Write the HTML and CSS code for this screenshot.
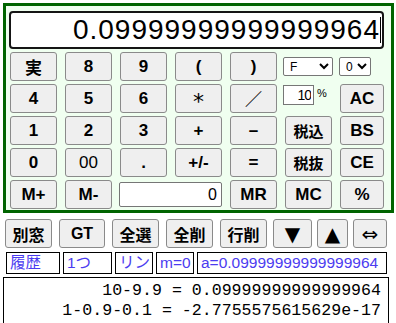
FILE: index.html
```html
<!DOCTYPE html>
<html lang="ja">
<head>
    <meta charset="UTF-8">
    <title>電卓</title>
    <link rel="stylesheet" href="styles.css">
</head>
<body>

    <div class="calc">
        <div class="display">0.09999999999999964<span class="caret"></span></div>
        <div class="keys">
            <button class="key">実</button>
            <button class="key">8</button>
            <button class="key">9</button>
            <button class="key">(</button>
            <button class="key">)</button>
            <div class="opts">
                <select class="sel-mode"><option>F</option></select>
                <select class="sel-digits"><option>0</option></select>
            </div>

            <button class="key">4</button>
            <button class="key">5</button>
            <button class="key">6</button>
            <button class="key star">*</button>
            <button class="key">／</button>
            <div class="rate"><input class="rate-input" value="10"><span class="pct">%</span></div>
            <button class="key">AC</button>

            <button class="key">1</button>
            <button class="key">2</button>
            <button class="key">3</button>
            <button class="key">+</button>
            <button class="key">–</button>
            <button class="key small">税込</button>
            <button class="key">BS</button>

            <button class="key">0</button>
            <button class="key light">00</button>
            <button class="key">.</button>
            <button class="key">+/-</button>
            <button class="key">=</button>
            <button class="key small">税抜</button>
            <button class="key">CE</button>

            <button class="key">M+</button>
            <button class="key">M-</button>
            <input class="memory" value="0">
            <button class="key">MR</button>
            <button class="key">MC</button>
            <button class="key">%</button>
        </div>
    </div>

    <div class="toolbar">
        <button class="tool w47">別窓</button>
        <button class="tool w46">GT</button>
        <button class="tool w47">全選</button>
        <button class="tool w47">全削</button>
        <button class="tool w47">行削</button>
        <div class="arrows">
            <button class="tool w39 tri">▼</button>
            <button class="tool w31 tri">▲</button>
            <button class="tool w34 thin">⇔</button>
        </div>
    </div>

    <div class="status">
        <span class="tag w54">履歴</span>
        <span class="tag w49">1つ</span>
        <span class="tag w38">リン</span>
        <span class="tag w38">m=0</span>
        <span class="tag w190">a=0.09999999999999964</span>
    </div>

    <div class="history">
        <div class="line">10-9.9 = 0.09999999999999964</div>
        <div class="line">1-0.9-0.1 = -2.7755575615629e-17</div>
    </div>

</body>
</html>
```

FILE: styles.css
```css
body {
    margin: 0;
    padding: 3px;
    background-color: #ffffff;
    font-family: "Liberation Sans", "Noto Sans CJK JP", sans-serif;
}

.calc {
    box-sizing: border-box;
    width: 391px;
    border: 3px solid #006400;
    background-color: #f0fff0;
    padding: 5px 7px 1px 3px;
}

.display {
    box-sizing: border-box;
    height: 38px;
    border: 2px solid #151515;
    border-radius: 4px;
    background-color: #ffffff;
    display: flex;
    justify-content: flex-end;
    align-items: center;
    padding-right: 1px;
    font-size: 28px;
    letter-spacing: 1px;
    color: #000000;
    margin-bottom: 3px;
}

.caret {
    display: inline-block;
    width: 1px;
    height: 26px;
    background-color: #000000;
}

.keys {
    display: grid;
    grid-template-columns: 47px 47px 47px 47px 47px 47px 44px;
    grid-auto-rows: 29px;
    column-gap: 8px;
    row-gap: 3px;
    margin-left: 1px;
}

.key,
.tool {
    box-sizing: border-box;
    margin: 0;
    padding: 0;
    background-color: #efefef;
    border: 1px solid #8a8a8a;
    border-radius: 3px;
    font-family: "Liberation Sans", "Noto Sans CJK JP", sans-serif;
    font-weight: bold;
    color: #000000;
}

.key {
    font-size: 17px;
}

.key.small {
    font-size: 15px;
}

.key.light {
    font-weight: normal;
}

.key.star {
    font-family: "DejaVu Sans", sans-serif;
    font-weight: normal;
    font-size: 22px;
    padding-top: 4px;
}

.opts {
    grid-column: span 2;
    display: flex;
    align-items: center;
    gap: 6px;
    margin-left: -2px;
}

.opts select {
    box-sizing: border-box;
    height: 19px;
    font-size: 12px;
    font-family: "Liberation Sans", sans-serif;
    border: 1px solid #767676;
    border-radius: 2px;
    background-color: #ffffff;
    padding: 0 0 0 2px;
}

.sel-mode {
    width: 50px;
}

.sel-digits {
    width: 32px;
}

.rate {
    display: flex;
    align-items: flex-start;
    padding-top: 1px;
    margin-left: -2px;
}

.rate-input {
    box-sizing: border-box;
    width: 31px;
    height: 20px;
    border: 1px solid #767676;
    padding: 0 2px 0 0;
    text-align: right;
    font-family: "Liberation Sans", sans-serif;
    font-size: 14px;
    letter-spacing: -1px;
}

.pct {
    font-size: 11px;
    margin: 2px 0 0 3px;
}

.memory {
    grid-column: span 2;
    box-sizing: border-box;
    width: 103px;
    height: 25px;
    margin: 2px 0 0 -1px;
    border: 1px solid #767676;
    border-radius: 2px;
    padding: 0 4px 0 0;
    text-align: right;
    font-family: "Liberation Sans", sans-serif;
    font-size: 16px;
}

.toolbar {
    display: flex;
    gap: 7px;
    margin: 6px 0 0 2px;
}

.arrows {
    display: flex;
    gap: 5px;
    margin-left: -1px;
}

.tool {
    height: 29px;
    font-size: 16px;
}

.tool.tri {
    font-family: "DejaVu Sans", sans-serif;
    font-weight: normal;
    font-size: 20px;
}

.tool.thin {
    font-family: "DejaVu Sans", sans-serif;
    font-weight: normal;
    font-size: 20px;
}

.w31 { width: 31px; }
.w34 { width: 34px; }
.w38 { width: 38px; }
.w39 { width: 39px; }
.w46 { width: 46px; }
.w47 { width: 47px; }
.w49 { width: 49px; }
.w54 { width: 54px; }
.w190 { width: 190px; }

.status {
    display: flex;
    gap: 3px;
    margin: 4px 0 0 3px;
}

.tag {
    box-sizing: border-box;
    height: 22px;
    border: 1px solid #000000;
    padding: 0 0 0 3px;
    line-height: 20px;
    font-size: 15.5px;
    color: #4b3cf0;
    white-space: nowrap;
    overflow: hidden;
}

.history {
    box-sizing: border-box;
    width: 386px;
    height: 60px;
    margin-top: 3px;
    border: 1px solid #000000;
    padding: 3px 7px 0 0;
    text-align: right;
    font-family: "Liberation Mono", monospace;
    font-size: 16.6px;
    line-height: 20px;
}
```
